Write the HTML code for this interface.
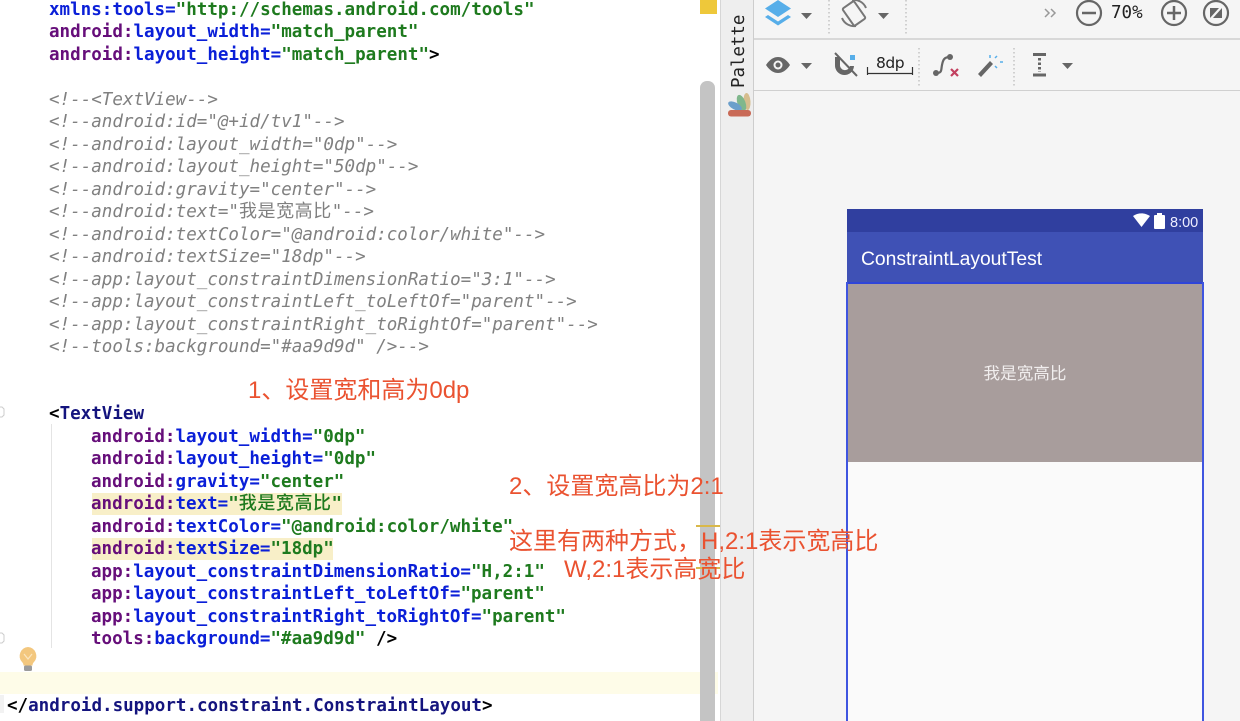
<!DOCTYPE html>
<html><head><meta charset="utf-8">
<style>
html,body{margin:0;padding:0;width:1240px;height:721px;overflow:hidden;background:#fff}
#w{position:relative;width:1240px;height:721px;overflow:hidden;background:#fff}
.a{position:absolute}
.l{position:absolute;margin-top:1px;white-space:pre;font:bold 17.55px/22px "DejaVu Sans Mono","Noto Sans CJK SC",monospace;height:22px;color:#000}
.c{font-weight:normal;font-style:italic;color:#808080}
.t{color:#14147e}.n{color:#660e7a}.k{color:#0a1fd8}.v{color:#1e7a1e}
.cj{display:inline-block;width:18.55px;line-height:14px;text-align:left;font-size:18px;font-weight:500;font-family:"Noto Sans CJK SC",sans-serif;font-style:normal}
.c .cj{font-weight:normal}
.r{position:absolute;white-space:pre;color:#ea5230;font:24px/28px "Liberation Sans","Noto Sans CJK SC",sans-serif}
.hl{position:absolute;background:#f8efc8;height:22px}
.ic{position:absolute}
</style></head><body><div id="w">
<div class="a" style="left:0;top:672px;width:718px;height:22px;background:#fefce8"></div>
<div class="hl" style="left:92px;top:493px;width:250px"></div>
<div class="hl" style="left:92px;top:538px;width:241px"></div>
<div class="a" style="left:51px;top:424px;width:1px;height:224px;background:#e4e4e4"></div>

<div class="l" style="left:49px;top:-2px"><span class="k">xmlns:tools=</span><span class="v">"http://schemas.android.com/tools"</span></div>
<div class="l" style="left:49px;top:20px"><span class="n">android:</span><span class="k">layout_width=</span><span class="v">"match_parent"</span></div>
<div class="l" style="left:49px;top:43px"><span class="n">android:</span><span class="k">layout_height=</span><span class="v">"match_parent"</span>&gt;</div>

<div class="l c" style="left:49px;top:88px">&lt;!--&lt;TextView--&gt;</div>
<div class="l c" style="left:49px;top:110px">&lt;!--android:id="@+id/tv1"--&gt;</div>
<div class="l c" style="left:49px;top:133px">&lt;!--android:layout_width="0dp"--&gt;</div>
<div class="l c" style="left:49px;top:155px">&lt;!--android:layout_height="50dp"--&gt;</div>
<div class="l c" style="left:49px;top:178px">&lt;!--android:gravity="center"--&gt;</div>
<div class="l c" style="left:49px;top:200px">&lt;!--android:text="<span class="cj">我</span><span class="cj">是</span><span class="cj">宽</span><span class="cj">高</span><span class="cj">比</span>"--&gt;</div>
<div class="l c" style="left:49px;top:223px">&lt;!--android:textColor="@android:color/white"--&gt;</div>
<div class="l c" style="left:49px;top:245px">&lt;!--android:textSize="18dp"--&gt;</div>
<div class="l c" style="left:49px;top:268px">&lt;!--app:layout_constraintDimensionRatio="3:1"--&gt;</div>
<div class="l c" style="left:49px;top:290px">&lt;!--app:layout_constraintLeft_toLeftOf="parent"--&gt;</div>
<div class="l c" style="left:49px;top:313px">&lt;!--app:layout_constraintRight_toRightOf="parent"--&gt;</div>
<div class="l c" style="left:49px;top:335px">&lt;!--tools:background="#aa9d9d" /&gt;--&gt;</div>

<div class="l" style="left:49px;top:402px">&lt;<span class="t">TextView</span></div>
<div class="l" style="left:91px;top:425px"><span class="n">android:</span><span class="k">layout_width=</span><span class="v">"0dp"</span></div>
<div class="l" style="left:91px;top:447px"><span class="n">android:</span><span class="k">layout_height=</span><span class="v">"0dp"</span></div>
<div class="l" style="left:91px;top:470px"><span class="n">android:</span><span class="k">gravity=</span><span class="v">"center"</span></div>
<div class="l" style="left:91px;top:492px"><span class="n">android:</span><span class="k">text=</span><span class="v">"<span class="cj">我</span><span class="cj">是</span><span class="cj">宽</span><span class="cj">高</span><span class="cj">比</span>"</span></div>
<div class="l" style="left:91px;top:515px"><span class="n">android:</span><span class="k">textColor=</span><span class="v">"@android:color/white"</span></div>
<div class="l" style="left:91px;top:537px"><span class="n">android:</span><span class="k">textSize=</span><span class="v">"18dp"</span></div>
<div class="l" style="left:91px;top:560px"><span class="n">app:</span><span class="k">layout_constraintDimensionRatio=</span><span class="v">"H,2:1"</span></div>
<div class="l" style="left:91px;top:582px"><span class="n">app:</span><span class="k">layout_constraintLeft_toLeftOf=</span><span class="v">"parent"</span></div>
<div class="l" style="left:91px;top:605px"><span class="n">app:</span><span class="k">layout_constraintRight_toRightOf=</span><span class="v">"parent"</span></div>
<div class="l" style="left:91px;top:627px"><span class="n">tools:</span><span class="k">background=</span><span class="v">"#aa9d9d"</span> /&gt;</div>
<div class="l" style="left:7px;top:694px">&lt;/<span class="t">android.support.constraint.ConstraintLayout</span>&gt;</div>

<svg class="ic" style="left:0;top:405px" width="6" height="240"><path d="M0 2h2l2 2v6l-2 2H0M0 228h2l2 2v6l-2 2H0" fill="none" stroke="#ccc"/></svg>
<svg class="ic" style="left:18px;top:646px" width="20" height="26" viewBox="0 0 20 26"><path d="M10 1a9 9 0 0 0-6 15c1 1 1.500 2 1.500 3.500h9c0-1.500.5-2.500 1.500-3.500a9 9 0 0 0-6-15z" fill="#f3c77e"/><path d="M6 8l4 5 4-5" fill="none" stroke="#fbe6c0" stroke-width="1.200"/><rect x="6" y="19.500" width="8" height="5.500" rx="1.500" fill="#9b9b9b"/></svg>
<div class="a" style="left:0;top:695px;width:4px;height:18px;background:#f2f2f2"></div>

<!-- scrollbar strip -->
<div class="a" style="left:700px;top:0;width:17px;height:14px;background:#eec83a"></div>
<div class="a" style="left:700px;top:81px;width:15px;height:640px;background:#c4c4c4;border-radius:7px 7px 0 0"></div>

<!-- right pane -->
<div class="a" style="left:720px;top:0;width:34px;height:721px;background:#eeeeee;border-left:1px solid #d6d6d6;border-right:1px solid #cdcdcd;box-sizing:border-box"></div>
<div class="a" style="left:754px;top:0;width:486px;height:721px;background:#f5f5f5"></div>
<div class="a" style="left:754px;top:38px;width:486px;height:2px;background:#d8d8d8"></div>
<div class="a" style="left:754px;top:90px;width:486px;height:1px;background:#d0d0d0"></div>
<div class="a" style="left:729px;top:88px;transform-origin:0 0;transform:rotate(-90deg);white-space:pre;font:17.4px/20px 'DejaVu Sans Mono','Liberation Mono',monospace;color:#222">Palette</div>

<svg class="ic" style="left:726px;top:92px" width="26" height="26" viewBox="0 0 26 26"><ellipse cx="21" cy="9.500" rx="3.500" ry="8.500" transform="rotate(-4 21 9.500)" fill="#d6bd8e"/><ellipse cx="15.500" cy="11" rx="4" ry="8.500" transform="rotate(-20 15.500 11)" fill="#7fb78c"/><ellipse cx="9" cy="14" rx="3.500" ry="7.500" transform="rotate(-62 9 14)" fill="#6b9fcb"/><rect x="2" y="18" width="23" height="6.500" rx="3" fill="#c96a57"/></svg>

<!-- toolbar icons -->
<svg class="ic" style="left:754px;top:0" width="486" height="90" viewBox="0 0 486 90">
<path d="M24 0l13 8.500L24 17 11 8.500z" fill="#57aee9"/><path d="M14 15l10 6.500L34 15l3 2-13 8.500L11 17z" fill="#57aee9"/>
<path d="M47 13h11l-5.500 6z" fill="#666"/>
<g fill="none" stroke="#777" stroke-width="2"><rect x="93" y="3" width="14" height="21" rx="1.500" transform="rotate(-35 100 13.500)"/><path d="M98 0A13 13 0 0 1 112 8M88 18A13 13 0 0 0 102 26"/></g>
<path d="M124 13h11l-5.500 6z" fill="#666"/>
<path d="M75 0v34M152 0v34" stroke="#aaa" stroke-width="1" stroke-dasharray="1.500 2.500"/>
<path d="M291 9l4 4-4 4M297 9l4 4-4 4" fill="none" stroke="#999" stroke-width="1.500"/>
<g fill="none" stroke="#666" stroke-width="2.200"><circle cx="335" cy="13" r="12"/><circle cx="420" cy="13" r="12"/><circle cx="462" cy="13" r="12"/></g>
<path d="M328 13h14M413 13h14M420 6v14" stroke="#666" stroke-width="2.500"/>
<path d="M456 8h9l-9 10zM468 18h-9l9-10z" fill="#666"/>

<path d="M12 65c4-6 8-8 12-8s8 2 12 8c-4 6-8 8-12 8s-8-2-12-8z" fill="#666"/><circle cx="24" cy="65" r="4.500" fill="#f5f5f5"/><circle cx="24" cy="65" r="2.500" fill="#666"/>
<path d="M47 63h11l-5.500 6z" fill="#666"/>
<path d="M81 57h5v7a5 5 0 0 0 10 2h4a9 9 0 0 1-19-1z" fill="#666"/><rect x="96" y="55" width="5" height="5" fill="#57aee9"/><path d="M81 53l22 23" stroke="#666" stroke-width="2"/>
<path d="M113.500 67v8M158.500 67v8M113.500 73.500h45" fill="none" stroke="#333" stroke-width="1.200"/>
<path d="M165 48v38M260 48v38" stroke="#aaa" stroke-width="1" stroke-dasharray="1.500 2.500"/>
<path d="M183 73c5 0 4-3 5-8s2-8 8-8" fill="none" stroke="#666" stroke-width="2.200"/><circle cx="182" cy="73" r="3" fill="#666"/><circle cx="196" cy="57" r="3" fill="#666"/>
<path d="M197 69l7 7m0-7l-7 7" stroke="#c2405f" stroke-width="2.200"/>
<path d="M224 74l12-13 3 3-12 13z" fill="#666"/>
<path d="M236 55v3M246 62h3M243 56l-2 2M243 68l-2-2" stroke="#57aee9" stroke-width="1.500"/>
<path d="M279 54.500h13M279 75h13" stroke="#666" stroke-width="3"/><path d="M285.500 58v14" stroke="#666" stroke-width="3" stroke-dasharray="2.500 2"/>
<path d="M308 63h11l-5.500 6z" fill="#666"/>
</svg>
<div class="a" style="left:876px;top:54px;font:15.5px/18px 'DejaVu Sans','Liberation Sans',sans-serif;color:#222;white-space:pre;letter-spacing:-.5px">8dp</div>
<div class="a" style="left:1111px;top:2px;font:17.5px/22px 'DejaVu Sans Mono','Liberation Mono',monospace;color:#222;white-space:pre">70%</div>

<!-- device -->
<div class="a" style="left:847px;top:209px;width:356px;height:512px;background:#fafafa"></div>
<div class="a" style="left:847px;top:209px;width:356px;height:23px;background:#303f9f"></div>
<div class="a" style="left:847px;top:232px;width:356px;height:51px;background:#3f51b5"></div>
<svg class="ic" style="left:1132px;top:212px" width="36" height="18" viewBox="0 0 36 18"><path d="M1 4c5-3.500 12-3.500 17 0l-8.500 11z" fill="#fff"/><rect x="22" y="3" width="11" height="14" rx="1" fill="#fff"/><rect x="25" y="1" width="5" height="3" fill="#fff"/></svg>
<div class="a" style="left:1170px;top:215px;font:14.5px/17px 'Liberation Sans',sans-serif;color:#eef;white-space:pre">8:00</div>
<div class="a" style="left:861px;top:248px;font:19.3px/24px 'Liberation Sans',sans-serif;color:#fff;white-space:pre">ConstraintLayoutTest</div>
<div class="a" style="left:847px;top:283px;width:356px;height:179px;background:#a89d9c"></div>
<div class="a" style="left:846px;top:282px;width:358px;height:2px;background:#2f45d8"></div>
<div class="a" style="left:846px;top:282px;width:2px;height:439px;background:#3f55e0"></div>
<div class="a" style="left:1202px;top:282px;width:2px;height:439px;background:#3f55e0"></div>
<div class="a" style="left:847px;top:361px;width:356px;text-align:center;font:16.6px/22px 'Noto Sans CJK SC',sans-serif;color:#f1eeee">我是宽高比</div>

<!-- annotations -->
<div class="a" style="left:696px;top:525px;width:24px;height:2px;background:#d9b84a"></div>
<div class="a" style="left:696px;top:567px;width:24px;height:2px;background:#d9b84a"></div>
<div class="r" style="left:248px;top:377px">1、设置宽和高为0dp</div>
<div class="r" style="left:509px;top:473px">2、设置宽高比为2:1</div>
<div class="r" style="left:509px;top:528px">这里有两种方式，H,2:1表示宽高比</div>
<div class="r" style="left:564px;top:556px">W,2:1表示高宽比</div>
</div></body></html>
